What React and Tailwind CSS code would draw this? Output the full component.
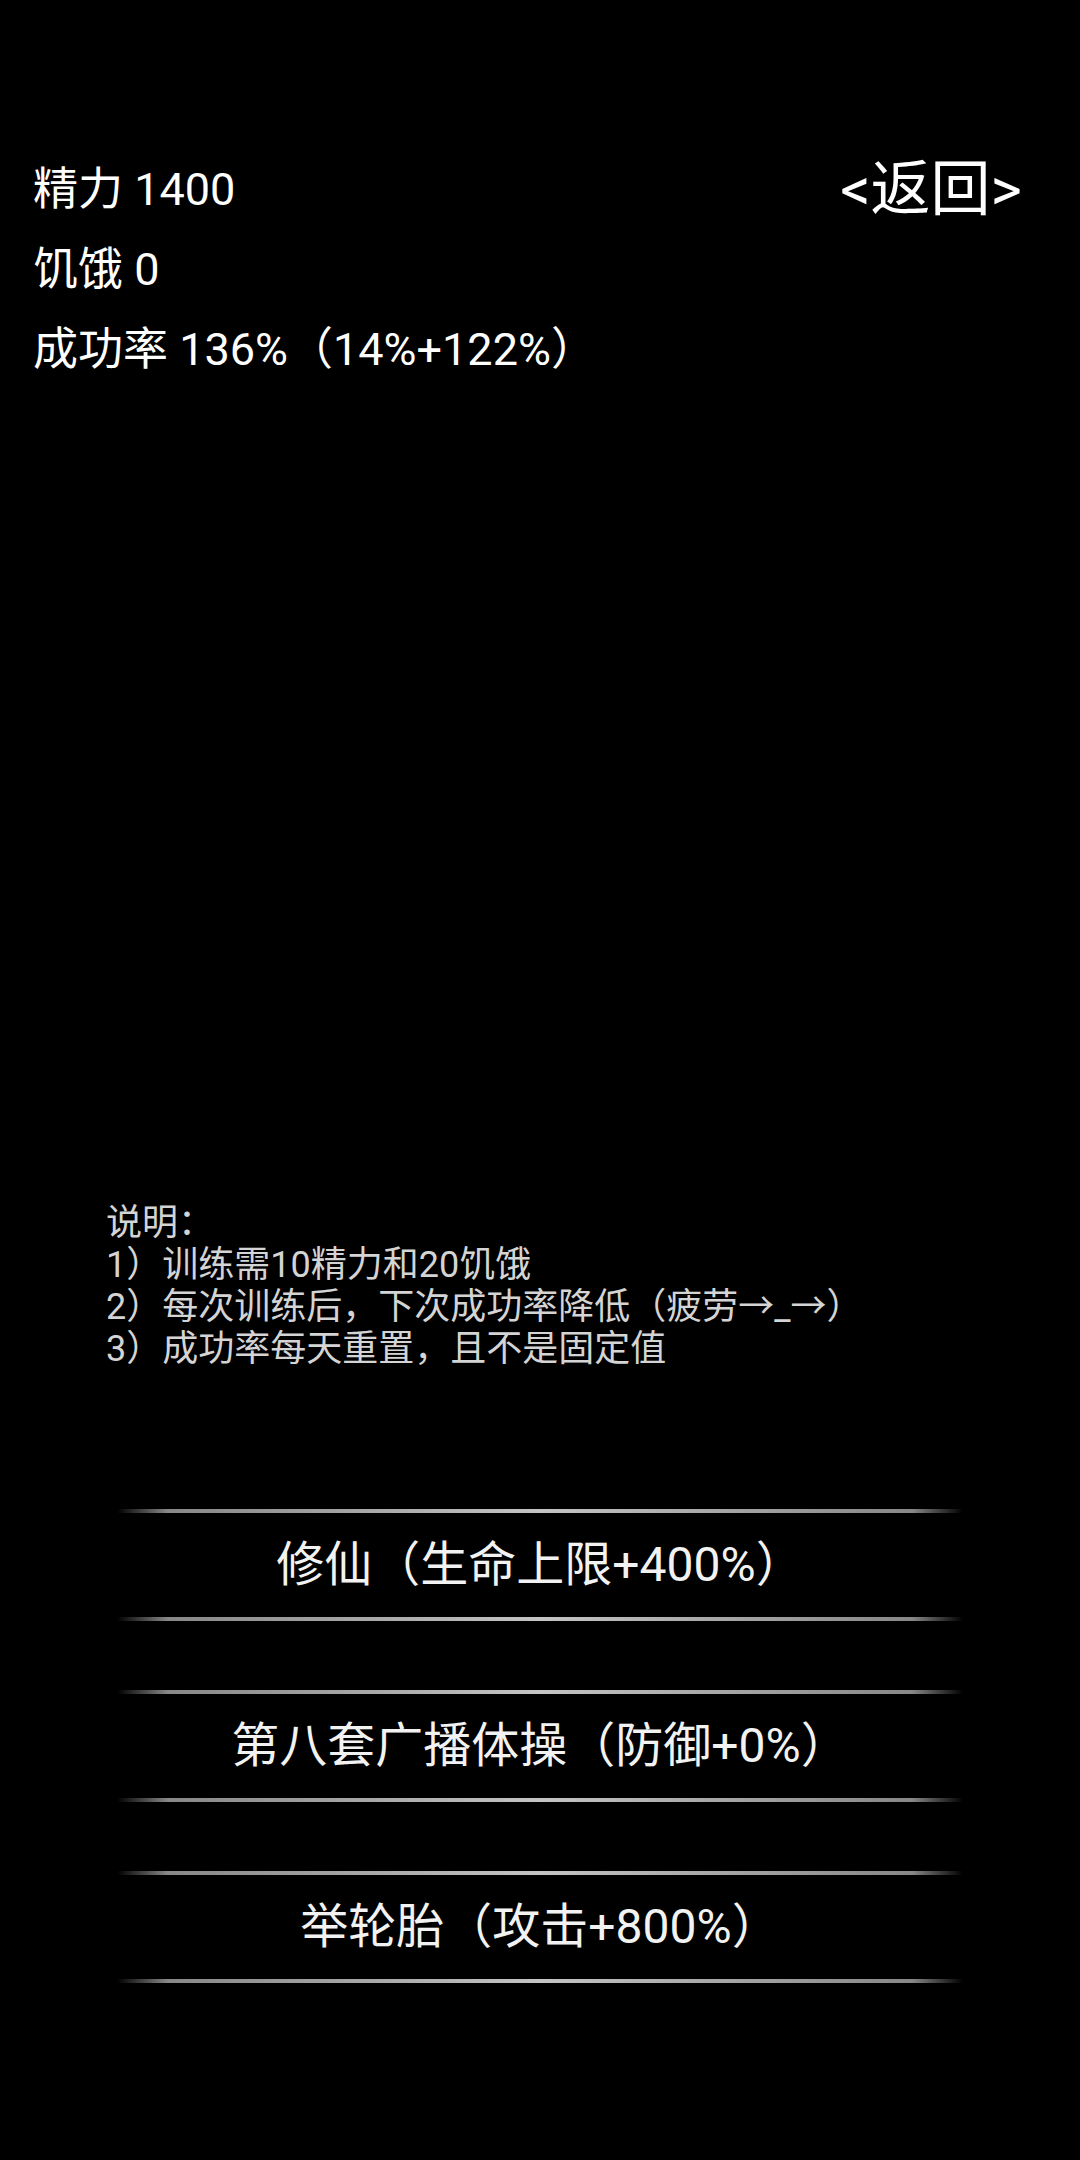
export default function App() {
  const lineCls =
    "h-[4px] w-[846px] bg-[linear-gradient(to_right,rgba(170,170,170,0)_0%,rgba(150,150,150,0.9)_6%,#a8a8a8_30%,#c4c4c4_50%,#a8a8a8_70%,rgba(150,150,150,0.9)_94%,rgba(170,170,170,0)_100%)]";
  const buttons = [
    "修仙（生命上限+400%）",
    "第八套广播体操（防御+0%）",
    "举轮胎（攻击+800%）",
  ];
  return (
    <div className="w-[1080px] h-[2160px] bg-black text-white font-['Roboto','Noto_Sans_CJK_SC',sans-serif] flex flex-col">
      <div className="pt-[150px] pl-[33px] pr-[58px]">
        <div className="flex items-center justify-between h-[80px]">
          <span className="text-[45px] leading-[80px]">精力 1400</span>
          <span className="text-[60px] leading-[80px]">&lt;返回&gt;</span>
        </div>
        <div className="text-[45px] leading-[80px]">饥饿 0</div>
        <div className="text-[45px] leading-[80px]">成功率 136%（14%+122%）</div>
      </div>
      <div className="mt-[812px] pl-[106px] text-[36px] leading-[42px] text-[#d4d4d4]">
        <div>说明：</div>
        <div>1）训练需10精力和20饥饿</div>
        <div>2）每次训练后，下次成功率降低（疲劳→_→）</div>
        <div>3）成功率每天重置，且不是固定值</div>
      </div>
      <div className="mt-[139px] flex flex-col items-center gap-[69px]">
        {buttons.map((b) => (
          <div key={b} className="flex flex-col items-center">
            <div className={lineCls}></div>
            <div className="h-[104px] flex items-center justify-center text-[48px] text-[#f2f2f2]">
              {b}
            </div>
            <div className={lineCls}></div>
          </div>
        ))}
      </div>
    </div>
  );
}
